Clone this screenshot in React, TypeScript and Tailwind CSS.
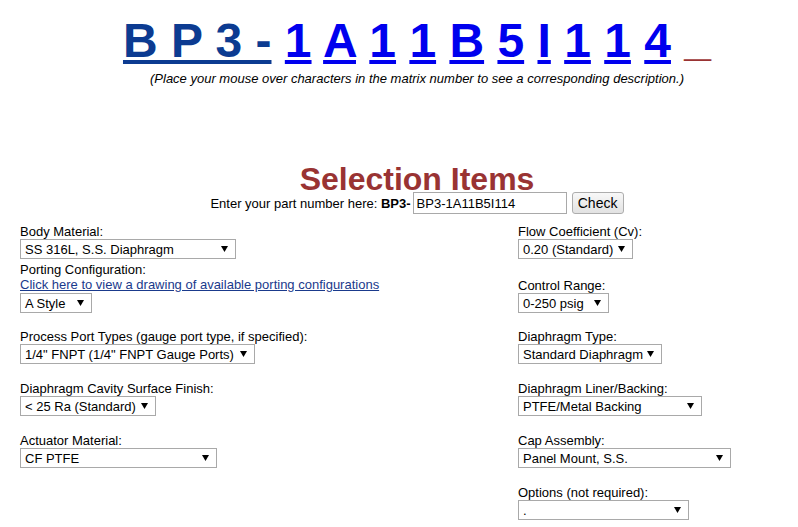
import React from 'react';

type Field = {
    label: string;
    value: string;
    width: string;
    link?: string;
};

const matrix = ['1', 'A', '1', '1', 'B', '5', 'I', '1', '1', '4'];

// left / right columns, one entry per table row (null = empty cell)
const rows: [Field | null, Field | null][] = [
    [
        { label: 'Body Material:', value: 'SS 316L, S.S. Diaphragm', width: 'w-[216px]' },
        { label: 'Flow Coefficient (Cv):', value: '0.20 (Standard)', width: 'w-[115px]' },
    ],
    [
        {
            label: 'Porting Configuration:',
            value: 'A Style',
            width: 'w-[72px]',
            link: 'Click here to view a drawing of available porting configurations',
        },
        { label: 'Control Range:', value: '0-250 psig', width: 'w-[91px]' },
    ],
    [
        { label: 'Process Port Types (gauge port type, if specified):', value: '1/4" FNPT (1/4" FNPT Gauge Ports)', width: 'w-[235px]' },
        { label: 'Diaphragm Type:', value: 'Standard Diaphragm', width: 'w-[144px]' },
    ],
    [
        { label: 'Diaphragm Cavity Surface Finish:', value: '< 25 Ra (Standard)', width: 'w-[136px]' },
        { label: 'Diaphragm Liner/Backing:', value: 'PTFE/Metal Backing', width: 'w-[184px]' },
    ],
    [
        { label: 'Actuator Material:', value: 'CF PTFE', width: 'w-[197px]' },
        { label: 'Cap Assembly:', value: 'Panel Mount, S.S.', width: 'w-[213px]' },
    ],
    [null, { label: 'Options (not required):', value: '.', width: 'w-[171px]' }],
];

const rowGaps = ['mt-[10px]', 'mt-[3px]', 'mt-[16px]', 'mt-[17px]', 'mt-[17px]', 'mt-[17px]'];

function FakeSelect({ value, width }: { value: string; width: string }) {
    return (
        <div className={`flex h-[20px] items-center justify-between border border-[#a9a9a9] bg-white pl-[4px] pr-[7px] ${width}`}>
            <span className="whitespace-nowrap leading-[15px]">{value}</span>
            <svg className="ml-[4px] shrink-0" width="7" height="6" viewBox="0 0 7 6">
                <polygon points="0,0 7,0 3.5,6" fill="#000" />
            </svg>
        </div>
    );
}

function FieldCell({ field }: { field: Field | null }) {
    if (!field) return <div />;
    return (
        <div className="flex flex-col items-start">
            <label className="leading-[15px]">{field.label}</label>
            {field.link && (
                <a href="#" className="leading-[16px] text-[#1a3a8c] underline">
                    {field.link}
                </a>
            )}
            <FakeSelect value={field.value} width={field.width} />
        </div>
    );
}

export default function App() {
    return (
        <div className="min-h-[527px] w-[798px] bg-white text-[13px] text-black font-['Liberation_Sans',Arial,sans-serif]">
            {/* Matrix number header */}
            <div className="pl-[36px] pt-[13px] text-center">
                <div className="text-[48px] font-bold leading-[55px]">
                    <a href="#" className="text-[#0c3b91] underline">B P 3 -</a>{' '}
                    {matrix.map((c, i) => (
                        <React.Fragment key={i}>
                            <a href="#" className="text-[#0000ee] underline">{c}</a>{' '}
                        </React.Fragment>
                    ))}
                    <span className="inline-block -translate-y-[2px] text-[#993333]">_</span>
                </div>
                <p className="mt-[3px] italic leading-[15px]">
                    (Place your mouse over characters in the matrix number to see a corresponding description.)
                </p>
            </div>

            {/* Selection heading + part number entry */}
            <div className="mt-[80px] pl-[36px] text-center">
                <h1 className="text-[32px] font-bold leading-[26px] text-[#993333]">Selection Items</h1>
                <div className="flex h-[22px] items-center justify-center">
                    <span className="whitespace-pre leading-[15px]">Enter your part number here: </span>
                    <b className="leading-[15px]">BP3-</b>
                    <input
                        className="ml-[2px] h-[22px] w-[154px] border border-[#a9a9a9] px-[3px] text-[13px] outline-none"
                        defaultValue="BP3-1A11B5I114"
                    />
                    <button className="ml-[5px] h-[22px] w-[52px] rounded-[3px] border border-[#adadad] bg-gradient-to-b from-[#f8f8f8] to-[#e2e2e2] text-[14px] leading-[15px]">
                        Check
                    </button>
                </div>
            </div>

            {/* Option table */}
            <div className="pl-[20px]">
                {rows.map(([left, right], i) => (
                    <div key={i} className={`grid grid-cols-[498px_1fr] items-end ${rowGaps[i]}`}>
                        <FieldCell field={left} />
                        <FieldCell field={right} />
                    </div>
                ))}
            </div>
        </div>
    );
}
